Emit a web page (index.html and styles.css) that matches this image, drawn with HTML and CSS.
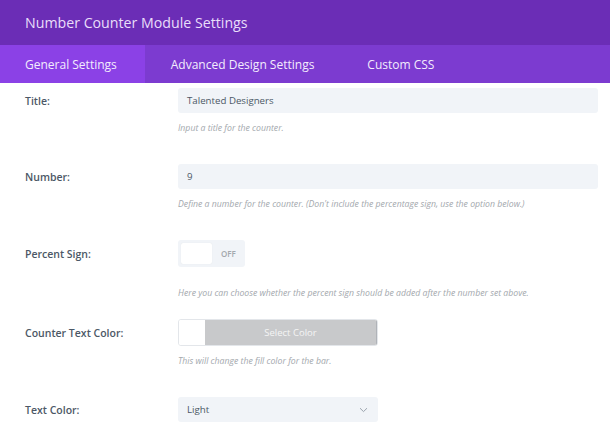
FILE: index.html
```html
<!DOCTYPE html>
<html>
<head>
<meta charset="utf-8">
<link rel="stylesheet" href="styles.css">
</head>
<body>
<div class="modal">
  <div class="header">Number Counter Module Settings</div>
  <div class="tabs">
    <div class="tab active">General Settings</div>
    <div class="tab">Advanced Design Settings</div>
    <div class="tab">Custom CSS</div>
  </div>
  <div class="content">
    <div class="row">
      <div class="label">Title:</div>
      <div class="field">
        <div class="input">Talented Designers</div>
        <div class="help">Input a title for the counter.</div>
      </div>
    </div>
    <div class="row">
      <div class="label">Number:</div>
      <div class="field">
        <div class="input">9</div>
        <div class="help">Define a number for the counter. (Don't include the percentage sign, use the option below.)</div>
      </div>
    </div>
    <div class="row row-toggle">
      <div class="label label-tall">Percent Sign:</div>
      <div class="field">
        <div class="toggle"><span class="knob"></span><span class="off">OFF</span></div>
        <div class="help help-far">Here you can choose whether the percent sign should be added after the number set above.</div>
      </div>
    </div>
    <div class="row">
      <div class="label label-tall">Counter Text Color:</div>
      <div class="field">
        <div class="color"><span class="swatch"></span><span class="pick">Select Color</span></div>
        <div class="help">This will change the fill color for the bar.</div>
      </div>
    </div>
    <div class="row">
      <div class="label">Text Color:</div>
      <div class="field">
        <div class="select"><span>Light</span>
          <svg class="chev" width="9" height="6" viewBox="0 0 9 6"><path d="M1 1.2 L4.5 4.6 L8 1.2" fill="none" stroke="#9aa3ad" stroke-width="1"/></svg>
        </div>
      </div>
    </div>
  </div>
</div>
</body>
</html>
```
FILE: styles.css
```css
* { box-sizing: border-box; }
html, body { margin: 0; padding: 0; background: #fff; }
body { font-family: "Open Sans", "Noto Sans", sans-serif; width: 610px; height: 432px; overflow: hidden; }

.header {
  height: 45px;
  background: #6b2db6;
  color: #e9defa;
  font-size: 14.2px;
  padding-left: 25px;
  display: flex;
  align-items: center;
}

.tabs {
  height: 38px;
  background: #7c3bd0;
  display: flex;
}
.tab {
  color: #f3ecfd;
  font-size: 12px;
  display: flex;
  align-items: center;
  padding: 0 27px 0 26px;
}
.tab.active {
  background: #8b41e6;
  padding: 0 28px 0 25px;
}

.content { padding-top: 5px; }

.row { display: flex; margin-bottom: 29px; }
.row-toggle { margin-bottom: 19px; }

.label {
  width: 178px;
  padding-left: 25px;
  height: 25px;
  display: flex;
  align-items: center;
  font-size: 10.5px;
  font-weight: 600;
  color: #4c5866;
}
.label-tall { height: 27px; }

.field { width: 420px; }

.input, .select {
  height: 25px;
  background: #f1f4f8;
  border-radius: 3px;
  padding-left: 9px;
  font-size: 9.7px;
  color: #4c5866;
  display: flex;
  align-items: center;
}
.select { width: 200px; justify-content: space-between; padding-right: 10px; }

.help {
  margin-top: 8px;
  height: 14px;
  line-height: 14px;
  font-size: 8.7px;
  font-style: italic;
  color: #a3a8ad;
}
.help-far { margin-top: 19px; }

.toggle {
  width: 67px;
  height: 27px;
  background: #f1f4f8;
  border-radius: 3px;
  padding: 3px;
  display: flex;
  align-items: center;
}
.knob {
  width: 31px;
  height: 21px;
  background: #fff;
  border-radius: 2px;
  box-shadow: 0 0 1px rgba(0,0,0,0.1);
}
.off {
  margin-left: 9px;
  font-size: 8px;
  font-weight: 600;
  color: #a3a8ad;
}

.color {
  width: 200px;
  height: 27px;
  display: flex;
  border: 1px solid #e3e6ea;
  border-radius: 3px;
  overflow: hidden;
}
.swatch { width: 26px; background: #fff; }
.pick {
  flex: 1;
  background: #c8c9cb;
  color: #f5f5f5;
  font-size: 9.5px;
  display: flex;
  align-items: center;
  justify-content: center;
  border-right: 1px solid #b0b3b8;
}
```
